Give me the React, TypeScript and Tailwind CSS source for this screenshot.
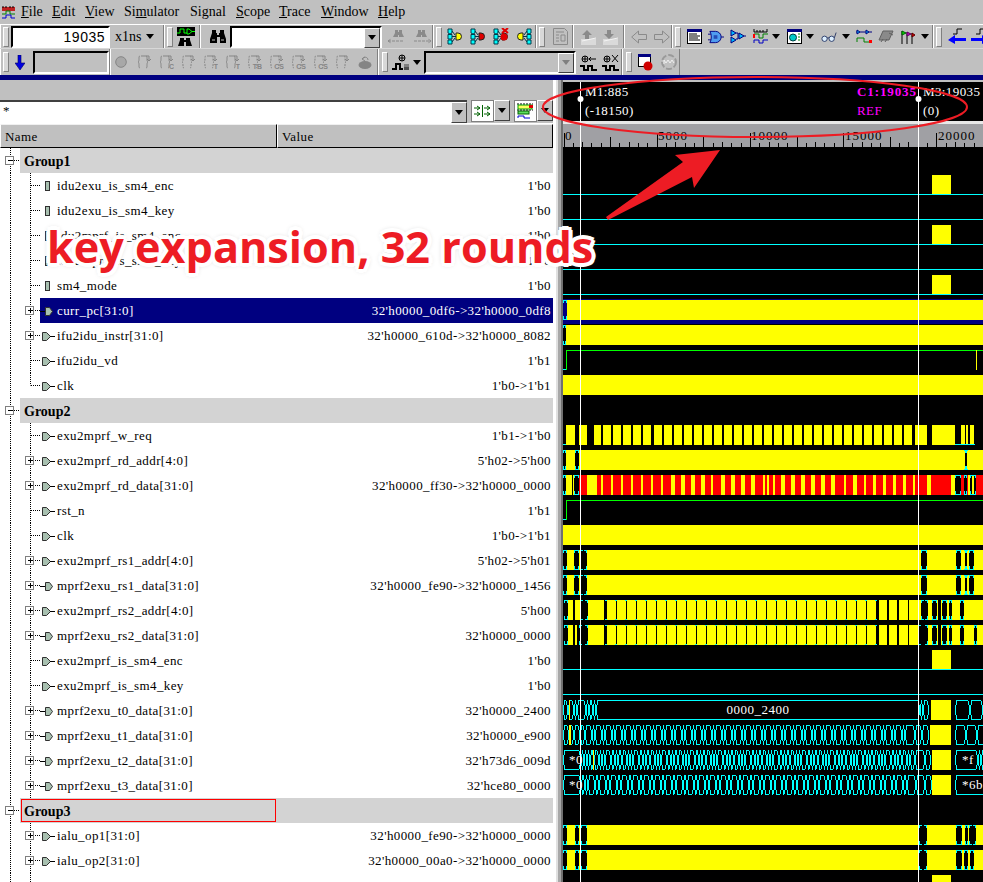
import React from "react";

type SvgP = { className?: string };
const C = "#00ffff";
const Y = "#ffff00";

function Grip({ className = "" }: SvgP) {
  return <div className={"w-[6px] h-[20px] shrink-0 bg-[#d8d8d8] border border-t-white border-l-white border-r-[#808080] border-b-[#808080] " + className} />;
}
function Tri({ className = "", color = "black" }: SvgP & { color?: string }) {
  return (
    <svg width="8" height="5" viewBox="0 0 8 5" className={"shrink-0 " + className}>
      <path d="M0 0H8L4 5Z" fill={color} />
    </svg>
  );
}
function ComboBtn({ className = "", color = "black" }: SvgP & { color?: string }) {
  return (
    <div className={"w-[16px] h-[20px] shrink-0 bg-[#c0c0c0] border border-t-white border-l-white border-r-[#404040] border-b-[#404040] flex items-center justify-center " + className}>
      <Tri color={color} />
    </div>
  );
}
function Binoc({ className = "", color = "black", w = 18 }: SvgP & { color?: string; w?: number }) {
  return (
    <svg width={w} height="15" viewBox="0 0 18 15" className={"shrink-0 " + className}>
      <path d="M3 1h4v3h1v2h2V4h1V1h4v3l2 6v4h-6V8H8v6H1v-4l2-6z" fill={color} />
      <path d="M3 11h3M12 11h3" stroke="#c0c0c0" />
    </svg>
  );
}
function BinocArrow({ className = "", left = false }: SvgP & { left?: boolean }) {
  return (
    <svg width="22" height="16" viewBox="0 0 22 16" className={"shrink-0 " + className}>
      <path d="M8 1h3v2h1V1h3v3l2 4h-5V6h-1v2H6l2-4z" fill="#8a8a8a" />
      {left ? <path d="M1 12h16M1 12l3-2M1 12l3 2" stroke="#8a8a8a" strokeDasharray="3 1" fill="none" /> : <path d="M4 12h16M21 12l-3-2M21 12l-3 2" stroke="#8a8a8a" strokeDasharray="3 1" fill="none" />}
    </svg>
  );
}
function Probe({ fill, x = false, rev = false, className = "" }: SvgP & { fill: string; x?: boolean; rev?: boolean }) {
  return (
    <svg width="16" height="17" viewBox="0 0 16 17" className={"shrink-0 " + className} style={rev ? { transform: "scaleX(-1)" } : undefined}>
      <path d="M1 1h4v4l-2 1-2-1zM1 6.500h4v4.500H1zM1 12h4v4H1z" fill="#00ffff" stroke="#003b4a" />
      <path d="M5 3l3 4M5 8.500h4M5 14l3-4" stroke="#003b4a" />
      <path d="M9 5h2a3.500 3.500 0 0 1 0 7H9z" fill={fill} stroke="#222" />
      {x && <path d="M9 0l6 5M15 0l-6 5" stroke="#e00000" strokeWidth="2" />}
      {x && <circle cx="11" cy="9" r="3.500" fill="#e00000" />}
    </svg>
  );
}
function Doc01({ className = "" }: SvgP) {
  return (
    <svg width="15" height="17" viewBox="0 0 15 17" className={"shrink-0 " + className}>
      <path d="M.5.5h11l3 3v13H.5z" fill="none" stroke="#8a8a8a" />
      <path d="M3 4h8M3 7h3M3 10h3M3 13h3M8 7h4v6H8z" stroke="#8a8a8a" fill="none" />
    </svg>
  );
}
function Stack({ className = "", up = true }: SvgP & { up?: boolean }) {
  return (
    <svg width="17" height="16" viewBox="0 0 17 16" className={"shrink-0 " + className}>
      <path d="M1 11h15M1 13h15M1 15h15" stroke="#f4f4f4" />
      <path d="M2 12l14-3" stroke="#f4f4f4" />
      {up ? <path d="M7 1l5 5h-3v4H5V6H2z" fill="#8a8a8a" /> : <path d="M5 1h4v4h3l-5 5-5-5h3z" fill="#8a8a8a" />}
    </svg>
  );
}
function Arrow({ className = "", left = false }: SvgP & { left?: boolean }) {
  return (
    <svg width="16" height="14" viewBox="0 0 16 14" className={"shrink-0 " + className}>
      {left ? <path d="M.7 7L7.500 1v3.500h8v5h-8V13z" fill="none" stroke="#8a8a8a" /> : <path d="M15.300 7L8.500 1v3.500h-8v5h8V13z" fill="none" stroke="#8a8a8a" />}
    </svg>
  );
}
function Icons() {
  return (
    <>
      <svg width="15" height="15" viewBox="0 0 15 15" className="shrink-0 ml-[6px]">
        <rect x=".5" y=".5" width="14" height="14" fill="white" stroke="black" />
        <rect x="0" y="0" width="15" height="3" fill="#000080" />
        <path d="M2 5h8M2 7h11M2 9h9M2 11h11" stroke="black" />
      </svg>
      <svg width="16" height="14" viewBox="0 0 17 14" className="shrink-0 ml-[6px]">
        <path d="M2 1h6a6 6 0 0 1 0 12H2c2-3 2-9 0-12z" fill="#4f9cf0" stroke="#000080" />
        <path d="M0 4h3M0 10h3M14 7h3M6 6h4M6 8h4" stroke="#000080" />
      </svg>
      <svg width="16" height="15" viewBox="0 0 16 15" className="shrink-0 ml-[6px]">
        <path d="M1 1l5 3-5 3zM1 8l5 3-5 3zM9 4l5 3-5 3z" fill="#00b8ff" stroke="#000080" />
        <path d="M6 4h2v6H6M14 7h2" stroke="#000080" fill="none" />
      </svg>
      <svg width="15" height="15" viewBox="0 0 15 15" className="shrink-0 ml-[7px]">
        <path d="M1 0v3h13V0M4 1v2M7 1v2M10 1v2" stroke="black" fill="none" />
        <path d="M1 9V5h5v4h4V5h5" stroke="#008000" fill="none" />
        <path d="M1 14v-3h5v3h4v-3h5" stroke="#0000c0" fill="none" />
        <rect x="0" y="5" width="2" height="4" fill="red" />
      </svg>
      <Tri className="ml-[4px]" />
      <svg width="15" height="15" viewBox="0 0 15 15" className="shrink-0 ml-[7px]">
        <rect x=".5" y=".5" width="14" height="14" fill="white" stroke="black" />
        <rect x="0" y="0" width="15" height="3" fill="#000080" />
        <circle cx="6" cy="8.500" r="3.500" fill="#00c8c8" stroke="#004040" />
        <path d="M11 5h2M11 8h2M11 11h2" stroke="#008000" />
      </svg>
      <Tri className="ml-[4px]" />
      <svg width="16" height="12" viewBox="0 0 18 12" className="shrink-0 ml-[7px]">
        <circle cx="4" cy="8" r="3" fill="#dcefff" stroke="#203060" />
        <circle cx="12" cy="8" r="3" fill="#dcefff" stroke="#203060" />
        <path d="M7 7h2M15 7l2-6" stroke="#203060" />
      </svg>
      <Tri className="ml-[5px]" />
      <svg width="16" height="15" viewBox="0 0 16 15" className="shrink-0 ml-[6px]">
        <path d="M1 1l3 2-3 2zM10 1l3 2-3 2z" fill="#00b8ff" stroke="#000080" />
        <path d="M0 3h1M4 3h6M13 3h3" stroke="#000080" />
        <path d="M1 13V9h7v4h7" stroke="#008000" fill="none" />
        <rect x="13" y="11" width="3" height="3" fill="red" />
      </svg>
      <svg width="16" height="13" viewBox="0 0 16 13" className="shrink-0 ml-[6px]">
        <path d="M5 1h10l-4 9H1z" fill="#8a8a8a" stroke="#606060" />
        <path d="M3 12l2-3M7 12l2-3M11 3l4 2" stroke="#606060" />
      </svg>
      <svg width="15" height="14" viewBox="0 0 15 14" className="shrink-0 ml-[7px]">
        <path d="M1 1v13M6 2v12M11 3v11" stroke="black" />
        <path d="M1 1l4 2-4 2z" fill="#00e000" stroke="#006000" />
        <path d="M6 2l4 2-4 2z" fill="#c000c0" stroke="#600060" />
        <path d="M11 3l3 2-3 2z" fill="#e00000" stroke="#600000" />
      </svg>
      <Tri className="ml-[5px]" />
    </>
  );
}
function Edge({ dir, className = "" }: SvgP & { dir: "l" | "r" }) {
  return (
    <svg width="18" height="17" viewBox="0 0 18 17" className={"shrink-0 " + className}>
      <path d="M5 6h4V1h5" stroke="black" fill="none" />
      {dir === "l" ? <path d="M0 12l7-5v3h11v3H7v3z" fill="#0000ff" /> : <path d="M18 12l-7-5v3H0v3h11v3z" fill="#0000ff" />}
    </svg>
  );
}
function Step({ label = "", kind = 0 }: { label?: string; kind?: number }) {
  return (
    <svg width="15" height="16" viewBox="0 0 15 16" className="shrink-0 mr-[7px]">
      <path d="M3 2C1 2 3 7 1 8c2 1 0 6 2 6M9 2c2 0 0 5 2 6-2 1 0 6-2 6" stroke="#858585" fill="none" strokeDasharray={kind ? "2 1" : undefined} />
      <path d="M4 2h8v5M10 5l2 2 2-2" stroke="#858585" fill="none" />
      {label && <text x="15" y="15" textAnchor="end" fontSize="7" fontWeight="700" fill="#858585" fontFamily="Liberation Sans">{label}</text>}
    </svg>
  );
}
function MarkIcon({ mode, className = "" }: SvgP & { mode: "tri" | "back" | "x" }) {
  return (
    <svg width="17" height="17" viewBox="0 0 17 17" className={"shrink-0 " + className}>
      {mode === "tri" ? (
        <g>
          <circle cx="10" cy="4" r="3" fill="none" stroke="black" />
          <path d="M10 1v6M7 4h6" stroke="black" />
          <rect x="12" y="10" width="5" height="3" fill="#808080" />
          <rect x="12" y="13" width="5" height="3" fill="#505050" />
          <path d="M0 15h4v-5h4v5h3" stroke="black" strokeWidth="2" fill="none" />
        </g>
      ) : (
        <g>
          <circle cx="5" cy="5" r="3" fill="none" stroke="black" />
          <path d="M5 2v6M2 5h6" stroke="black" />
          {mode === "back" && <path d="M9 5h7M9 5l2-2M9 5l2 2" stroke="black" fill="none" />}
          {mode === "x" && <path d="M10 1l6 7M16 1l-6 7" stroke="black" />}
          <path d="M0 12h4v4h4v-4h4v4h5" stroke="black" strokeWidth="2" fill="none" />
        </g>
      )}
    </svg>
  );
}

function Menu() {
  const item = "text-[14px] leading-[24px]";
  return (
    <div className="h-[24px] flex items-center pl-[2px] bg-[#c0c0c0] text-black">
      <svg width="13" height="13" viewBox="0 0 13 13" className="shrink-0 mr-[6px]">
        <rect x="0" y="1" width="13" height="4" fill="#c02020" />
        <path d="M1 0v2M4 0v2M8 0v2M11 0v2" stroke="#000" />
        <path d="M0 8h4V5h4v3h5" stroke="#008000" fill="none" />
        <path d="M0 12h4V9h5v3h4" stroke="#0000d0" fill="none" />
      </svg>
      <span className={item + " w-[31px]"}><u>F</u>ile</span>
      <span className={item + " w-[33px]"}><u>E</u>dit</span>
      <span className={item + " w-[39px]"}><u>V</u>iew</span>
      <span className={item + " w-[66px]"}>Si<u>m</u>ulator</span>
      <span className={item + " w-[46px]"}>Si<u>g</u>nal</span>
      <span className={item + " w-[43px]"}><u>S</u>cope</span>
      <span className={item + " w-[42px]"}><u>T</u>race</span>
      <span className={item + " w-[57px]"}><u>W</u>indow</span>
      <span className={item}><u>H</u>elp</span>
    </div>
  );
}

const sec = "h-full shrink-0 flex items-center border-r border-r-[#808080] border-l border-l-white";

function Toolbars() {
  return (
    <div className="bg-[#c0c0c0]">
      <div className="h-[25px] flex border-t border-t-white border-b border-b-[#d8d8d8] overflow-hidden">
        <div className={sec + " w-[164px] pl-[2px]"}>
          <Grip />
          <div className="ml-[2px] w-[99px] h-[22px] bg-white border-2 border-t-black border-l-black border-r-white border-b-white text-right pr-[3px] text-[14px] leading-[18px] font-['Liberation_Sans'] tracking-[0.5px]">19035</div>
          <span className="ml-[5px] text-[14px]">x1ns</span>
          <Tri className="ml-[5px]" />
        </div>
        <div className={sec + " w-[36px] pl-[2px]"}>
          <Grip />
          <svg width="18" height="20" viewBox="0 0 18 20" className="shrink-0 ml-[4px]">
            <rect x="0" y="0" width="18" height="9" fill="#000" />
            <path d="M0 6h3V2h4v4h3M10 2h2l3 2.500-3 2.500h-2zM15 4.500h3" stroke="#00ff00" fill="none" />
            <path d="M3 10h4v2h2v-2h4v2l2 6H9v-4H7v4H1l2-6z" fill="#000" transform="translate(0,1)" />
          </svg>
        </div>
        <div className={sec + " w-[233px] pl-[8px]"}>
          <Binoc />
          <div className="ml-[3px] w-[157px] h-[22px] bg-white border-2 border-t-black border-l-black border-r-white border-b-white flex justify-end">
            <ComboBtn className="h-[18px]" />
          </div>
          <BinocArrow left className="ml-[5px]" />
          <BinocArrow className="ml-[1px]" />
        </div>
        <div className={sec + " w-[103px] pl-[2px]"}>
          <Grip />
          <Probe fill="#ffff00" className="ml-[5px]" />
          <Probe fill="#e00000" className="ml-[7px]" />
          <Probe fill="#e00000" x className="ml-[7px]" />
          <Probe fill="#ffff00" rev className="ml-[7px]" />
        </div>
        <div className={sec + " w-[37px] pl-[2px]"}>
          <Grip />
          <Doc01 className="ml-[8px]" />
        </div>
        <div className={sec + " w-[51px] pl-[6px]"}>
          <Stack />
          <Stack up={false} className="ml-[5px]" />
        </div>
        <div className={sec + " w-[48px] pl-[6px]"}>
          <Arrow left />
          <Arrow className="ml-[7px]" />
        </div>
        <div className={sec + " w-[261px] pl-[2px]"}>
          <Grip />
          <Icons />
        </div>
        <div className={sec + " flex-1 pl-[2px]"}>
          <Grip />
          <Edge dir="l" className="ml-[6px]" />
          <Edge dir="r" className="ml-[5px]" />
        </div>
      </div>
      <div className="h-[26px] flex overflow-hidden">
        <div className={sec + " w-[110px] pl-[2px]"}>
          <Grip />
          <svg width="10" height="15" viewBox="0 0 10 15" className="shrink-0 ml-[6px]">
            <path d="M3 0h3v8h4l-5 7-5-7h3z" fill="#0000e0" stroke="#000060" strokeWidth=".6" />
          </svg>
          <div className="ml-[8px] w-[79px] h-[23px] border-2 border-t-black border-l-black border-r-white border-b-white" />
        </div>
        <div className={sec + " w-[268px] pl-[4px]"}>
          <svg width="12" height="12" viewBox="0 0 12 12" className="shrink-0 mr-[10px]">
            <circle cx="6" cy="6" r="5.300" fill="#a8a8a8" stroke="#858585" />
          </svg>
          <Step /><Step label="C" /><Step kind={1} /><Step label="T" kind={1} /><Step label="T" /><Step label="TB" kind={1} /><Step label="CS" kind={1} /><Step label="CS" kind={1} /><Step label="CS" kind={1} /><Step kind={1} />
          <svg width="14" height="13" viewBox="0 0 14 13" className="shrink-0 ml-[1px]">
            <ellipse cx="7" cy="9" rx="6.500" ry="4" fill="#858585" />
            <path d="M4 3c2-3 6-2 6 1M4 3l3-2M4 3l3 2" stroke="#858585" fill="none" />
          </svg>
        </div>
        <div className={sec + " w-[244px] pl-[3px]"}>
          <Grip />
          <MarkIcon mode="tri" className="ml-[4px]" />
          <Tri className="ml-[4px]" />
          <div className="ml-[3px] w-[152px] h-[23px] border-2 border-t-black border-l-black border-r-white border-b-white flex justify-end shrink-0">
            <ComboBtn color="#808080" className="h-[19px]" />
          </div>
          <MarkIcon mode="back" className="ml-[4px]" />
          <MarkIcon mode="x" className="ml-[5px]" />
        </div>
        <div className={sec + " w-[58px] pl-[3px]"}>
          <Grip />
          <svg width="15" height="17" viewBox="0 0 15 17" className="shrink-0 ml-[6px]">
            <rect x=".5" y=".5" width="12" height="12" fill="white" stroke="black" />
            <rect x="0" y="0" width="13" height="3" fill="#000080" />
            <circle cx="10" cy="12" r="4.500" fill="#d00000" />
          </svg>
          <svg width="16" height="16" viewBox="0 0 16 16" className="shrink-0 ml-[8px]">
            <circle cx="8" cy="8" r="7" fill="none" stroke="#9a9a9a" strokeWidth="2" strokeDasharray="6 2" />
            <path d="M3 10V6l2 3 2-3 2 3 2-3 2 3" stroke="#f0f0f0" fill="none" />
          </svg>
        </div>
      </div>
      <div className="h-[5px] bg-[#000080]" />
    </div>
  );
}

type Kind = "bar" | "in" | "out";
type Row = { g?: string; n?: string; v?: string; k?: Kind; e?: boolean; last?: boolean; sel?: boolean; red?: boolean };

const rows: Row[] = [
  { g: "Group1" },
  { n: "idu2exu_is_sm4_enc", v: "1'b0", k: "bar" },
  { n: "idu2exu_is_sm4_key", v: "1'b0", k: "bar" },
  { n: "idu2mprf_is_sm4_enc", v: "1'b0", k: "bar" },
  { n: "idu2mprf_is_sm4_key", v: "1'b0", k: "bar" },
  { n: "sm4_mode", v: "1'b0", k: "bar" },
  { n: "curr_pc[31:0]", v: "32'h0000_0df6->32'h0000_0df8", k: "out", e: true, sel: true },
  { n: "ifu2idu_instr[31:0]", v: "32'h0000_610d->32'h0000_8082", k: "in", e: true },
  { n: "ifu2idu_vd", v: "1'b1", k: "in" },
  { n: "clk", v: "1'b0->1'b1", k: "in", last: true },
  { g: "Group2" },
  { n: "exu2mprf_w_req", v: "1'b1->1'b0", k: "in" },
  { n: "exu2mprf_rd_addr[4:0]", v: "5'h02->5'h00", k: "in", e: true },
  { n: "exu2mprf_rd_data[31:0]", v: "32'h0000_ff30->32'h0000_0000", k: "in", e: true },
  { n: "rst_n", v: "1'b1", k: "in" },
  { n: "clk", v: "1'b0->1'b1", k: "in" },
  { n: "exu2mprf_rs1_addr[4:0]", v: "5'h02->5'h01", k: "in", e: true },
  { n: "mprf2exu_rs1_data[31:0]", v: "32'h0000_fe90->32'h0000_1456", k: "out", e: true },
  { n: "exu2mprf_rs2_addr[4:0]", v: "5'h00", k: "in", e: true },
  { n: "mprf2exu_rs2_data[31:0]", v: "32'h0000_0000", k: "out", e: true },
  { n: "exu2mprf_is_sm4_enc", v: "1'b0", k: "in" },
  { n: "exu2mprf_is_sm4_key", v: "1'b0", k: "in" },
  { n: "mprf2exu_t0_data[31:0]", v: "32'h0000_2400", k: "out", e: true },
  { n: "mprf2exu_t1_data[31:0]", v: "32'h0000_e900", k: "out", e: true },
  { n: "mprf2exu_t2_data[31:0]", v: "32'h73d6_009d", k: "out", e: true },
  { n: "mprf2exu_t3_data[31:0]", v: "32'hce80_0000", k: "out", e: true },
  { g: "Group3", red: true },
  { n: "ialu_op1[31:0]", v: "32'h0000_fe90->32'h0000_0000", k: "in", e: true },
  { n: "ialu_op2[31:0]", v: "32'h0000_00a0->32'h0000_0000", k: "in", e: true },
];

function Box({ x, y, minus }: { x: number; y: number; minus?: boolean }) {
  return (
    <g shapeRendering="crispEdges">
      <rect x={x - 4.5} y={y - 3.5} width="8" height="8" fill="white" stroke="#808080" />
      <path d={`M${x - 2} ${y + 0.5}h5`} stroke="black" />
      {!minus && <path d={`M${x + 0.5} ${y - 2}v5`} stroke="black" />}
    </g>
  );
}
function Glyph({ r }: { r: Row }) {
  if (r.g) {
    return (
      <svg width="20" height="25" viewBox="0 0 20 25" className="shrink-0">
        <path d="M10.500 0v25" stroke="black" strokeDasharray="1 1" />
        <path d="M14 12.500h6" stroke="black" strokeDasharray="1 1" />
        <Box x={10} y={12} minus />
      </svg>
    );
  }
  return (
    <svg width="40" height="25" viewBox="0 0 40 25" className="shrink-0">
      <path d="M10.500 0v25" stroke="black" strokeDasharray="1 1" />
      <path d={r.last ? "M30.500 0v12.500" : "M30.500 0v25"} stroke="black" strokeDasharray="1 1" />
      <path d="M31 12.500h9" stroke="black" strokeDasharray="1 1" />
      {r.e && <Box x={30} y={12} />}
    </svg>
  );
}
function SigIcon({ k }: { k: Kind }) {
  return (
    <svg width="17" height="13" viewBox="0 0 17 13" className="shrink-0">
      {k === "bar" && <rect x="5.500" y="1.500" width="4" height="9" fill="#a8c0b0" stroke="#303030" />}
      {k === "in" && (
        <g>
          <path d="M2.500 2.500h4l4 4-4 4h-4z" fill="#a8c0b0" stroke="#303030" />
          <path d="M10 6.500h5" stroke="black" />
        </g>
      )}
      {k === "out" && (
        <g>
          <path d="M5.500 2.500h4l3 4-3 4h-4z" fill="#a8c0b0" stroke="#303030" />
          <path d="M0 6.500h5" stroke="black" />
        </g>
      )}
    </svg>
  );
}
function TreeRow({ r }: { r: Row }) {
  if (r.g) {
    return (
      <div className="h-[25px] flex bg-white">
        <Glyph r={r} />
        <div className="flex-1 bg-[#d3d3d3] flex items-center pl-[1px]">
          <div className="relative w-[255px] h-[23px] flex items-center pl-[3px] pt-[1px] font-bold text-[14px] text-black">
            {r.g}
            {r.red && (
              <svg width="255" height="23" viewBox="0 0 255 23" className="absolute left-0 top-0">
                <rect x=".5" y=".5" width="254" height="22" fill="none" stroke="#ff0000" shapeRendering="crispEdges" />
              </svg>
            )}
          </div>
        </div>
      </div>
    );
  }
  return (
    <div className="h-[25px] flex bg-white">
      <Glyph r={r} />
      <div className={"flex-1 flex items-center pt-[1px] text-[13px] tracking-[0.4px] pr-[2px] " + (r.sel ? "bg-[#000080] text-white" : "text-black")}>
        <SigIcon k={r.k!} />
        <span className="whitespace-nowrap">{r.n}</span>
        <span className="ml-auto whitespace-nowrap">{r.v}</span>
      </div>
    </div>
  );
}

function Filter() {
  return (
    <div className="h-[44px] pt-[20px] bg-[#c0c0c0] flex items-start">
      <div className="w-[467px] h-[23px] shrink-0 bg-white border-t-2 border-t-[#404040] flex justify-between pl-[3px] text-[13px] leading-[18px]">
        <span>*</span>
        <ComboBtn className="h-[21px]" />
      </div>
      <div className="ml-[4px] w-[23px] h-[22px] shrink-0 bg-white border border-[#808080] flex items-center justify-center">
        <svg width="17" height="12" viewBox="0 0 17 12">
          <path d="M0 3h6M3 1l3 2-3 2M0 9h6M3 7l3 2-3 2M8.500 0v12M10 3h6M13 1l3 2-3 2M10 9h6M13 7l3 2-3 2" stroke="#006000" fill="none" />
        </svg>
      </div>
      <ComboBtn className="h-[21px]" />
      <div className="ml-[4px] w-[23px] h-[22px] shrink-0 bg-white border border-[#808080] flex items-center justify-center">
        <svg width="17" height="16" viewBox="0 0 17 16">
          <path d="M0 1h16M0 7h16" stroke="black" strokeDasharray="2 1" />
          <rect x="1" y="2" width="14" height="4" fill="#ffff60" stroke="#00a000" />
          <rect x="12" y="2" width="4" height="3" fill="#e00000" />
          <rect x="1" y="8" width="11" height="3" fill="#60e060" stroke="#006000" />
          <path d="M1 15v-2h6v2h6" stroke="#0000d0" fill="none" />
        </svg>
      </div>
      <ComboBtn className="h-[21px]" />
    </div>
  );
}

function LeftPane() {
  return (
    <div className="w-[553px] shrink-0 flex flex-col bg-white">
      <Filter />
      <div className="h-[25px] flex shrink-0 bg-[#c0c0c0] text-[13px] tracking-[0.4px] border-t border-t-white">
        <div className="w-[277px] border border-l-white border-t-[#f0f0f0] border-r-black border-b-black pl-[4px] pt-[1px] flex items-center">Name</div>
        <div className="flex-1 border border-l-white border-t-[#f0f0f0] border-r-black border-b-black pl-[4px] pt-[1px] flex items-center">Value</div>
      </div>
      {rows.map((r, i) => <TreeRow key={i} r={r} />)}
      <div className="h-[25px] flex bg-white">
        <Glyph r={{ k: "in" }} />
      </div>
    </div>
  );
}

const top = (i: number) => 150 + 25 * i;

function Bars({ i, segs, fill = Y }: { i: number; segs: number[][]; fill?: string }) {
  return <>{segs.map(([a, b], j) => <rect key={j} x={a} y={top(i)} width={b - a} height={20} fill={fill} />)}</>;
}
function Gap({ i, xs }: { i: number; xs: number[][] }) {
  const y = top(i);
  return (
    <path
      d={xs.map(([a, b]) => `M${a + 0.5} ${y + 3}V${y + 0.5}H${a + 3}M${a + 0.5} ${y + 16}V${y + 19.5}H${a + 3}M${b - 0.5} ${y + 3}V${y + 0.5}H${b - 3}M${b - 0.5} ${y + 16}V${y + 19.5}H${b - 3}`).join("")}
      stroke={C}
      fill="none"
    />
  );
}
function Ticks({ i, from, to, period }: { i: number; from: number; to: number; period: number }) {
  const y = top(i);
  let d = "";
  for (let x = from; x < to; x += period) d += `M${x} ${y + 0.5}h2M${x} ${y + 19.5}h2`;
  return <path d={d} stroke={C} fill="none" />;
}
function Low({ i, from, to }: { i: number; from: number; to: number }) {
  return <path d={`M${from} ${top(i) + 19.5}H${to}`} stroke={C} />;
}
function Hex({ i, ts }: { i: number; ts: number[] }) {
  const y = top(i);
  let d = "";
  for (let k = 0; k < ts.length - 1; k++) {
    const a = ts[k], b = ts[k + 1];
    const ch = Math.min(2, (b - a) / 2);
    d += `M${a} ${y + 10}L${a + ch} ${y + 0.5}H${b - ch}L${b} ${y + 10}L${b - ch} ${y + 19.5}H${a + ch}Z`;
  }
  return <path d={d} stroke={C} fill="none" />;
}
function range(from: number, to: number, steps: number[]) {
  const out: number[] = [];
  let x = from, k = 0;
  while (x < to) { out.push(x); x += steps[k % steps.length]; k++; }
  return out;
}
function pulses(from: number, to: number, period: number, w: number) {
  const out: number[][] = [];
  for (let x = from; x < to; x += period) out.push([x, Math.min(x + w, to)]);
  return out;
}

const wreq = [[566, 575], [579, 587], [594, 601], ...pulses(603, 653, 10, 8), ...pulses(654, 913, 10, 7.5), [915, 927], [932, 955], [961, 965], [966, 968], [970, 974]];
const stripes = [[587, 597], [601, 603], [611, 613], [621, 623], [631, 633], [641, 643], [651, 653], [661, 663], [671, 675], [681, 685], [691, 695], [701, 705], [711, 713], [721, 725], [731, 735], [741, 745], [751, 755], [763, 765], [767, 769], [773, 775], [781, 785], [791, 795], [801, 805], [811, 815], [821, 825], [831, 835], [844, 846], [853, 857], [864, 866], [873, 876], [883, 886], [893, 896], [903, 906], [913, 915], [927, 931], [951, 955]];
const rs2a = [[568, 573], [575, 580], [588, 604], ...pulses(607, 877, 10, 9), [879, 887], [889, 897], [899, 908], [909, 921], [928, 932], [937, 938], [941, 942], [947, 949], [952, 960], [964, 983]];
const rs2d = [[568, 573], [575, 577], [588, 604], ...pulses(607, 877, 10, 9), [879, 887], [889, 897], [899, 908], [909, 918], [928, 932], [937, 938], [941, 942], [947, 949], [952, 960], [964, 974], [977, 983]];

function WavePane() {
  return (
    <svg width="420" height="800" viewBox="563 82 420 800" className="shrink-0 block bg-black">
      <g shapeRendering="crispEdges">
        <rect x="563" y="121" width="420" height="3" fill="#e8e8e8" />
        <rect x="563" y="124" width="420" height="23" fill="#a0a0a4" />
        <path d={Array.from({ length: 46 }, (_, k) => { const x = Math.round(563.5 + k * 9.32) + 0.5; const h = k % 10 === 0 ? 14 : k % 5 === 0 ? 10 : k % 5 === 2 ? 5 : 4; return `M${x} 147v-${h}`; }).join("")} stroke="black" />
        <rect x="563" y="299" width="420" height="25" fill="#000080" />
        <Bars i={1} segs={[[932, 951]]} />
        <Bars i={3} segs={[[932, 951]]} />
        <Bars i={5} segs={[[932, 951]]} />
        <Bars i={20} segs={[[932, 951]]} />
        <path d="M563 194.500H983M563 219.500H983M563 244.500H983M563 269.500H983M563 294.500H983M563 669.500H983M563 694.500H983" stroke={C} />
        <Bars i={6} segs={[[567, 983]]} />
        <Gap i={6} xs={[[563, 567]]} />
        <Bars i={7} segs={[[566, 983]]} />
        <Gap i={7} xs={[[563, 566]]} />
        <path d="M563 369.500H566.500V350.500H983" stroke="#00ff00" fill="none" />
        <path d="M563 369.500H566" stroke={C} />
        <rect x="976" y="350" width="1" height="20" fill={Y} />
        <Bars i={9} segs={[[563, 983]]} />
        <Bars i={11} segs={wreq} />
        <Low i={11} from={563} to={566} />
        <Low i={11} from={955} to={975} />
        <Bars i={12} segs={[[566, 575], [579, 965], [967, 983]]} />
        <Gap i={12} xs={[[563, 566], [575, 579], [965, 967]]} />
        <Bars i={13} segs={[[566, 572], [573, 574]]} />
        <Bars i={13} segs={[[579, 983]]} fill="#ff0000" />
        <Bars i={13} segs={stripes} />
        <rect x="955" y="475" width="6" height="20" fill="black" />
        <rect x="964" y="475" width="3" height="20" fill="black" />
        <rect x="968" y="475" width="2" height="20" fill={Y} />
        <rect x="970" y="475" width="2" height="20" fill="black" />
        <rect x="972" y="475" width="2" height="20" fill={Y} />
        <rect x="974" y="475" width="2" height="20" fill="black" />
        <Gap i={13} xs={[[563, 566], [574, 579], [955, 961], [964, 967], [970, 976]]} />
        <path d="M563 519.500H566.500V500.500H983" stroke="#00ff00" fill="none" />
        <path d="M563 519.500H566" stroke={C} />
        <Bars i={15} segs={[[563, 983]]} />
        <Bars i={16} segs={[[567, 574], [579, 580], [587, 921], [927, 956], [961, 965], [967, 969], [974, 983]]} />
        <Gap i={16} xs={[[563, 567], [574, 579], [580, 587], [921, 927], [956, 961], [965, 967], [969, 974]]} />
        <Bars i={17} segs={[[567, 574], [579, 580], [587, 921], [927, 956], [961, 965], [967, 969], [974, 983]]} />
        <Gap i={17} xs={[[563, 567], [574, 579], [580, 587], [921, 927], [956, 961], [965, 967], [969, 974]]} />
        <Bars i={18} segs={rs2a} />
        <Ticks i={18} from={605} to={876} period={10} />
        <Gap i={18} xs={[[564, 568], [580, 588], [921, 928], [932, 937], [942, 947], [949, 952], [960, 964]]} />
        <Bars i={19} segs={rs2d} />
        <Ticks i={19} from={605} to={876} period={10} />
        <Gap i={19} xs={[[564, 568], [579, 588], [918, 928], [932, 937], [942, 947], [949, 952], [960, 964], [974, 977]]} />
        <Hex i={22} ts={[563, 568, 574, 577, 586, 589, 593, 596, 920, 923, 929]} />
        <Hex i={22} ts={[955, 970, 983, 995]} />
        <Bars i={22} segs={[[931, 951]]} />
        <rect x="569" y="700" width="1" height="20" fill={Y} />
        <Hex i={23} ts={[563, 569, 574, 580, ...range(585, 912, [7, 3]), 915, 922, 929]} />
        <Hex i={23} ts={[955, 966, 977, 988]} />
        <Bars i={23} segs={[[930, 951]]} />
        <rect x="569" y="725" width="2" height="20" fill={Y} />
        <Hex i={24} ts={[563, 581, 584, ...range(587, 912, [3, 4, 5, 3, 3, 6, 4]), 915, 925, 931]} />
        <Hex i={24} ts={[955, 978, 981, 990]} />
        <Bars i={24} segs={[[932, 951]]} />
        <rect x="593" y="750" width="1" height="20" fill={Y} />
        <Hex i={25} ts={[563, 581, 585, ...range(588, 912, [7, 4]), 916, 925, 932]} />
        <Hex i={25} ts={[955, 990]} />
        <Bars i={25} segs={[[932, 951]]} />
        <Bars i={27} segs={[[567, 575], [579, 581], [587, 919], [927, 956], [962, 965], [968, 969], [976, 983]]} />
        <Gap i={27} xs={[[563, 567], [575, 579], [581, 587], [919, 927], [956, 962], [965, 968], [969, 976]]} />
        <Bars i={28} segs={[[567, 575], [579, 581], [587, 919], [927, 956], [962, 964], [968, 970], [974, 983]]} />
        <Gap i={28} xs={[[563, 567], [575, 579], [581, 587], [919, 927], [956, 962], [964, 968], [970, 974]]} />
        <Bars i={29} segs={[[932, 951]]} />
        <path d="M580.500 82V882M918.500 82V882" stroke="white" />
      </g>
      <circle cx="580.500" cy="99" r="3" fill="white" />
      <circle cx="918.500" cy="99" r="3" fill="white" />
      <g fontFamily="'Liberation Serif'" fontSize="13" fill="white" letterSpacing=".4">
        <text x="585" y="96">M1:885</text>
        <text x="585" y="115">(-18150)</text>
        <text x="923" y="96">M3:19035</text>
        <text x="923" y="115">(0)</text>
        <text x="857" y="96" fill="#ff00ff" fontWeight="700" letterSpacing=".9">C1:19035</text>
        <text x="857" y="115" fill="#ff00ff">REF</text>
      </g>
      <g fontFamily="'Liberation Serif'" fontSize="13" fill="black" letterSpacing="1">
        <text x="565" y="140">0</text>
        <text x="658" y="140">5000</text>
        <text x="751" y="140">10000</text>
        <text x="845" y="140">15000</text>
        <text x="938" y="140">20000</text>
      </g>
      <g fontFamily="'Liberation Serif'" fontSize="13" fill="white" letterSpacing=".5">
        <text x="758" y="714" textAnchor="middle">0000_2400</text>
        <text x="569" y="764">*0</text>
        <text x="569" y="789">*0</text>
        <text x="962" y="764">*f</text>
        <text x="962" y="789">*6b</text>
      </g>
    </svg>
  );
}

export default function App() {
  return (
    <div className="relative w-[983px] h-[882px] overflow-hidden bg-[#c0c0c0] font-['Liberation_Serif',serif] text-black">
      <Menu />
      <Toolbars />
      <div className="flex h-[802px] overflow-hidden">
        <LeftPane />
        <div className="w-[3px] shrink-0 bg-white" />
        <div className="w-[7px] shrink-0 bg-[#a8a8a8] border-l-2 border-l-[#e0e0e0] border-r-2 border-r-[#707070]" />
        <div className="pt-[2px] bg-[#c0c0c0]">
          <WavePane />
        </div>
      </div>
      <svg width="983" height="882" viewBox="0 0 983 882" className="absolute left-0 top-0 pointer-events-none">
        <ellipse cx="755" cy="107" rx="212" ry="30" fill="none" stroke="#ed1c24" strokeWidth="2" />
        <path d="M720 150L675 155L683 162L606 217L608 220L692 177L694 188Z" fill="#ed1c24" />
      </svg>
      <div className="absolute left-[47px] top-[220px] whitespace-nowrap font-['Open_Sans',sans-serif] font-bold text-[43.2px] leading-[54px] text-[#ed1c24] [text-shadow:4px_0_0_white,-4px_0_0_white,0_4px_0_white,0_-4px_0_white,3px_3px_0_white,-3px_3px_0_white,3px_-3px_0_white,-3px_-3px_0_white,0_0_6px_#888]">key expansion, 32 rounds</div>
    </div>
  );
}
